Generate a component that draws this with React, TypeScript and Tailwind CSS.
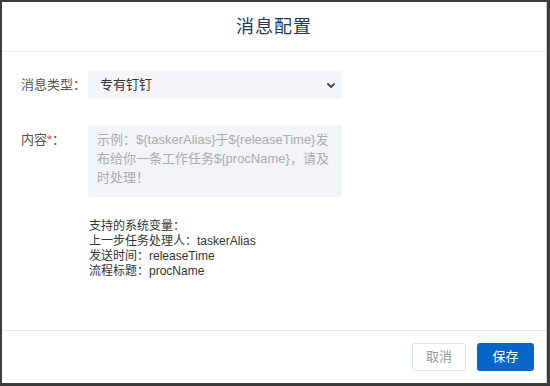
import React from "react";

const font = { fontFamily: '"Liberation Sans", "Noto Sans CJK SC", sans-serif' };

export default function App() {
  return (
    <div
      className="w-[550px] h-[386px] bg-[#3c3c3c] pl-[2px] pt-[2px] pr-[3px] pb-[3px] flex"
      style={font}
    >
      <div className="flex-1 bg-white flex flex-col border-r border-[#c8c8c8]">
        <header className="h-[50px] flex items-center justify-center border-b border-[#ebedf3]">
          <h2 className="text-[18px] leading-[24px] text-[#253858] tracking-[1px] mt-[1px]">消息配置</h2>
        </header>

        <section className="flex-1 pl-[19px] pt-[19px]">
          <div className="flex items-center">
            <label className="w-[67px] text-[13px] leading-[18px] text-[#555]">消息类型：</label>
            <div className="w-[254px] h-[28px] bg-[#f4f5f8] rounded-[2px] flex items-center justify-between pl-[12px] pr-[6px]">
              <span className="text-[13px] leading-[18px] text-[#333]">专有钉钉</span>
              <svg width="10" height="7" viewBox="0 0 10 7">
                <path d="M1.5 1.5 L5 5 L8.5 1.5" fill="none" stroke="#444" strokeWidth="1.8" />
              </svg>
            </div>
          </div>

          <div className="flex mt-[26px]">
            <label className="w-[67px] text-[13px] leading-[18px] text-[#555] pt-[6px]">
              内容<span className="text-[#f0463c]">*</span>：
            </label>
            <div className="w-[254px] h-[72px] bg-[#f3f4f7] rounded-[2px] pl-[9px] pr-[6px] pt-[5px] text-[13px] leading-[19px] text-[#a9abb0] break-all">
              示例：${"{taskerAlias}"}于${"{releaseTime}"}发布给你一条工作任务${"{procName}"}，请及时处理！
            </div>
          </div>

          <div className="ml-[68px] mt-[22px] text-[12px] leading-[15px] text-[#333]">
            <p>支持的系统变量：</p>
            <p>上一步任务处理人：taskerAlias</p>
            <p>发送时间：releaseTime</p>
            <p>流程标题：procName</p>
          </div>
        </section>

        <footer className="h-[53px] border-t border-[#e4e6ea] flex items-center justify-end gap-[11px] pr-[12px]">
          <button className="w-[54px] h-[28px] border border-[#dde1e8] rounded-[3px] text-[13px] text-[#9a9a9a] bg-white">
            取消
          </button>
          <button className="w-[57px] h-[28px] rounded-[3px] text-[13px] text-white bg-[#0565c9]">
            保存
          </button>
        </footer>
      </div>
    </div>
  );
}
